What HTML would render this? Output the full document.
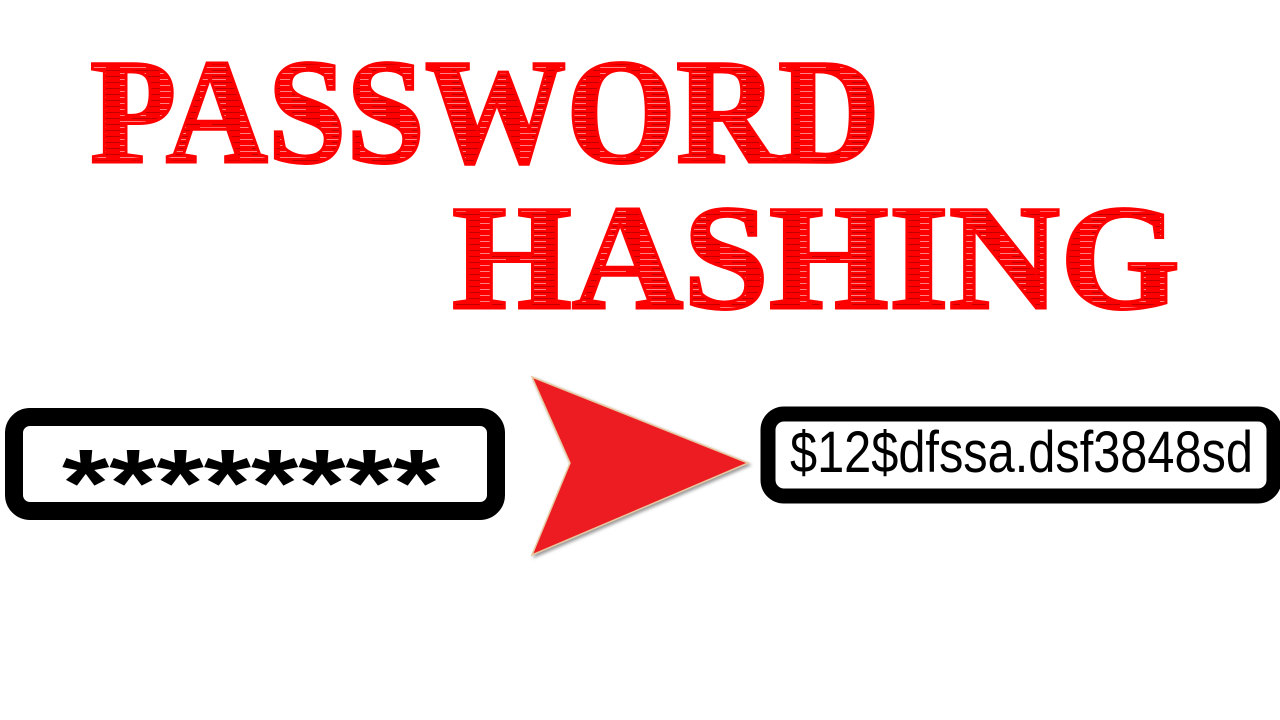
<!DOCTYPE html>
<html><head><meta charset="utf-8"><style>html,body{margin:0;padding:0;background:#fff;width:1280px;height:720px;overflow:hidden}</style></head>
<body>
<svg width="1280" height="720" viewBox="0 0 1280 720" xmlns="http://www.w3.org/2000/svg">
<defs>
<pattern id="st" width="40" height="6" patternUnits="userSpaceOnUse">
<rect width="40" height="6" fill="#f00"/>
<rect x="0" y="1" width="26" height="1" fill="#ff8080"/>
<rect x="12" y="4" width="28" height="1" fill="#c00000"/>
</pattern>
<filter id="sh"><feDropShadow dx="2" dy="2" stdDeviation="1.5" flood-color="#999"/></filter>
</defs>
<text x="90" y="162" textLength="790" lengthAdjust="spacingAndGlyphs" font-family="Liberation Serif, serif" font-weight="bold" font-size="150" fill="url(#st)" stroke="#f00" stroke-width="3">PASSWORD</text>
<text x="452" y="308" textLength="728" lengthAdjust="spacingAndGlyphs" font-family="Liberation Serif, serif" font-weight="bold" font-size="150" fill="url(#st)" stroke="#f00" stroke-width="3">HASHING</text>
<rect x="14" y="417" width="482" height="94" rx="16" fill="#fff" stroke="#000" stroke-width="18"/>
<text x="62" y="516" textLength="378" lengthAdjust="spacingAndGlyphs" font-family="Liberation Sans, sans-serif" font-weight="bold" font-size="96" fill="#000">********</text>
<path d="M532 377 L748 463 L532 555 L570 463 Z" fill="#ed1c24" stroke="#e8c8a0" stroke-width="1.5" filter="url(#sh)"/>
<rect x="768" y="414" width="506" height="82" rx="16" fill="#fff" stroke="#000" stroke-width="15"/>
<text x="790" y="472" textLength="463" lengthAdjust="spacingAndGlyphs" font-family="Liberation Sans, sans-serif" font-size="58" fill="#000">$12$dfssa.dsf3848sd</text>
</svg>
</body></html>
